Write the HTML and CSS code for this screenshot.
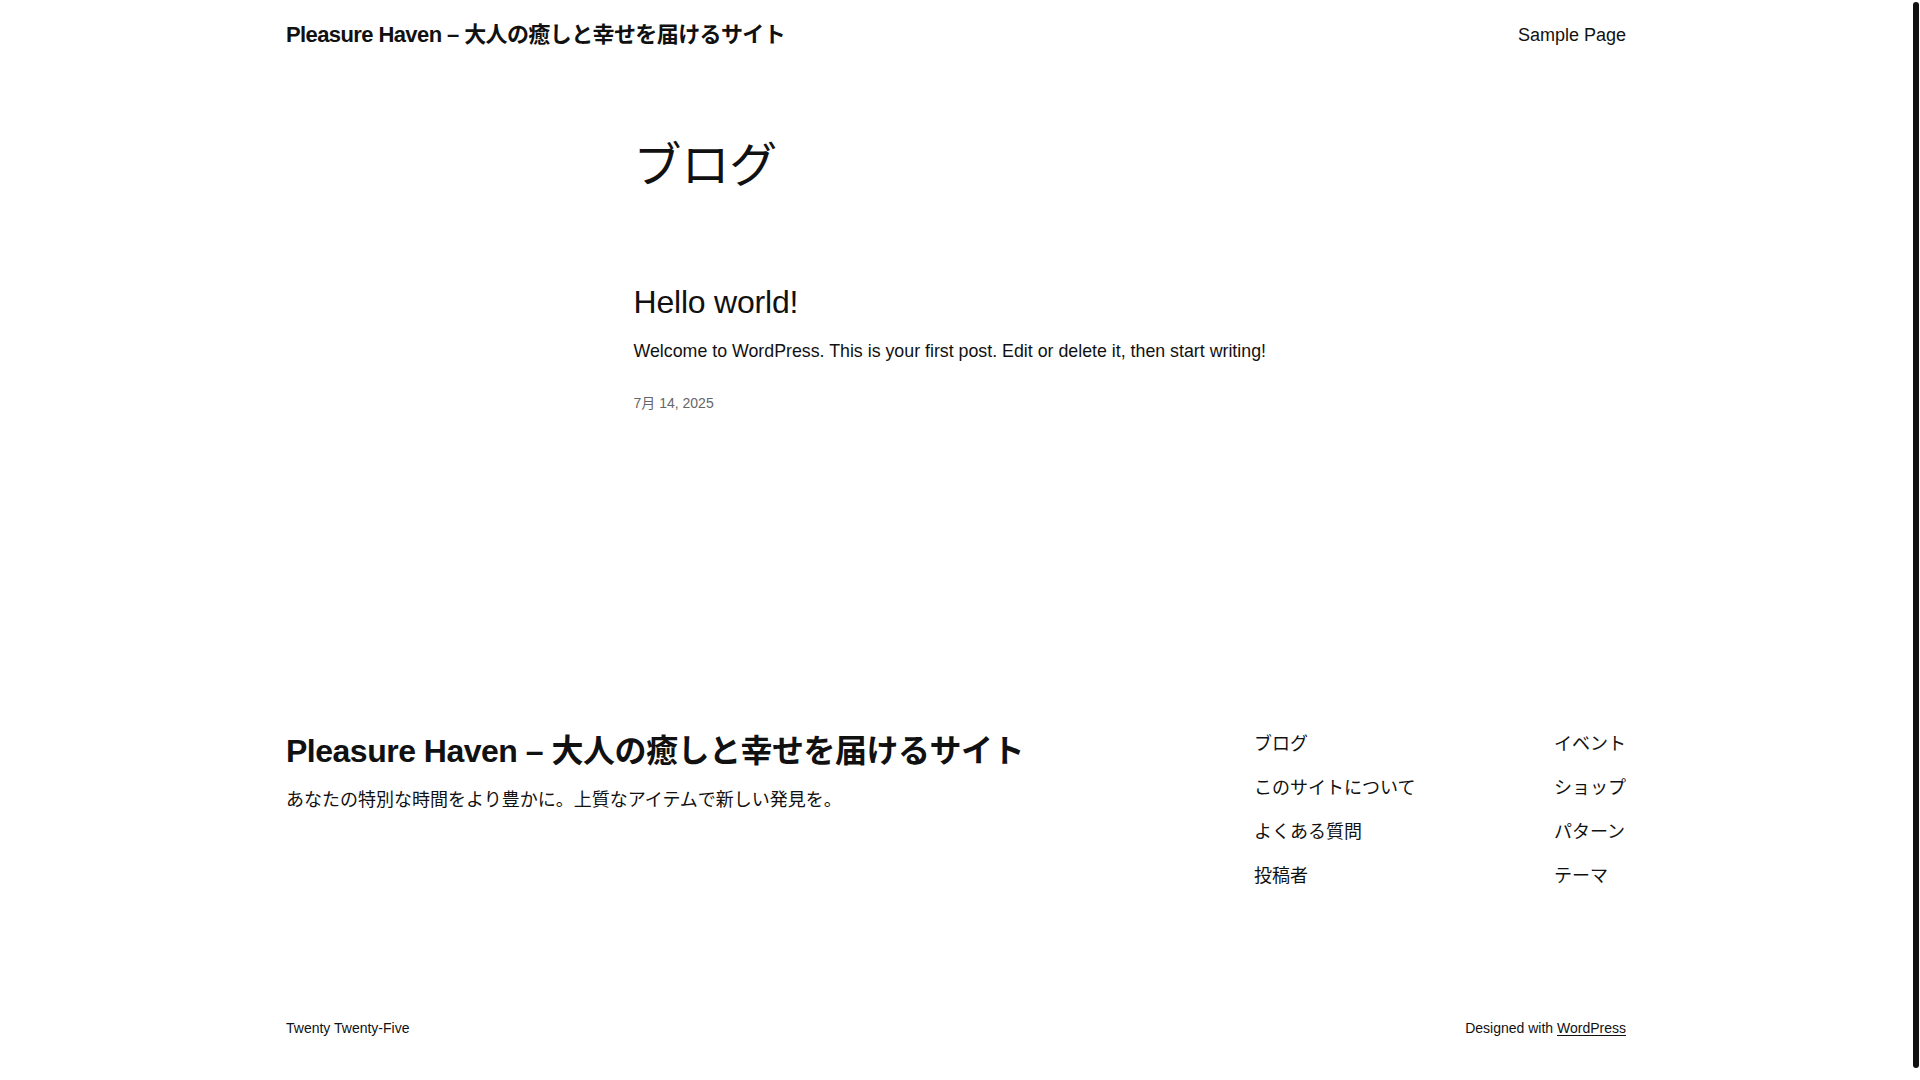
FILE: index.html
```html
<!DOCTYPE html>
<html lang="ja">
<head>
<meta charset="utf-8">
<title>ブログ – Pleasure Haven</title>
<link rel="stylesheet" href="styles.css">
</head>
<body>
<div class="viewport">
  <header class="site-header">
    <div class="wide row-between">
      <a class="site-title" href="#">Pleasure Haven – 大人の癒しと幸せを届けるサイト</a>
      <nav class="top-nav"><a href="#">Sample Page</a></nav>
    </div>
  </header>

  <main class="site-main">
    <div class="content">
      <h1 class="page-title">ブログ</h1>
      <article class="post">
        <h2 class="post-title"><a href="#">Hello world!</a></h2>
        <p class="post-excerpt">Welcome to WordPress. This is your first post. Edit or delete it, then start writing!</p>
        <div class="post-date">7月 14, 2025</div>
      </article>
    </div>
  </main>

  <footer class="site-footer">
    <div class="wide">
      <div class="footer-top">
        <div class="footer-brand">
          <a class="footer-title" href="#">Pleasure Haven – 大人の癒しと幸せを届けるサイト</a>
          <p class="tagline">あなたの特別な時間をより豊かに。上質なアイテムで新しい発見を。</p>
        </div>
        <div class="footer-navs">
          <ul class="footer-nav">
            <li><a href="#">ブログ</a></li>
            <li><a href="#">このサイトについて</a></li>
            <li><a href="#">よくある質問</a></li>
            <li><a href="#">投稿者</a></li>
          </ul>
          <ul class="footer-nav">
            <li><a href="#">イベント</a></li>
            <li><a href="#">ショップ</a></li>
            <li><a href="#">パターン</a></li>
            <li><a href="#">テーマ</a></li>
          </ul>
        </div>
      </div>
      <div class="footer-bottom">
        <span>Twenty Twenty-Five</span>
        <span>Designed with <a class="u" href="#">WordPress</a></span>
      </div>
    </div>
  </footer>
</div>
<div class="scrollbar"><div class="thumb"></div></div>
</body>
</html>
```

FILE: styles.css
```css
html, body {
  margin: 0;
  padding: 0;
  background: #fff;
  overflow: hidden;
}
body {
  font-family: "Liberation Sans", Arial, "Noto Sans CJK JP", sans-serif;
  color: #111;
  font-size: 18px;
  line-height: 1.6;
}
a { color: inherit; text-decoration: none; }
.viewport {
  width: 1912px;
  height: 1080px;
}
.wide {
  width: 1340px;
  margin: 0 auto;
}
.row-between {
  display: flex;
  justify-content: space-between;
  align-items: center;
}
.site-header {
  padding: 21px 0 19px;
}
.site-title {
  font-weight: 700;
  font-size: 22px;
  line-height: 28px;
  letter-spacing: -0.6px;
}
.top-nav a {
  font-size: 18px;
  line-height: 28px;
}
.site-main {
  padding-top: 70px;
}
.content {
  width: 645px;
  margin: 0 auto;
}
.page-title {
  margin: 0;
  font-weight: 400;
  font-size: 48px;
  line-height: 54px;
  letter-spacing: -0.1px;
}
.post {
  padding-top: 90px;
}
.post-title {
  margin: 0;
  font-weight: 400;
  font-size: 32px;
  line-height: 38px;
  letter-spacing: -0.2px;
}
.post-excerpt {
  margin: 16px 0 0;
  font-size: 17.8px;
  line-height: 29px;
}
.post-date {
  margin-top: 27px;
  font-size: 14px;
  line-height: 21px;
  color: #666;
}
.site-footer {
  padding-top: 316px;
}
.footer-top {
  display: flex;
  justify-content: space-between;
  align-items: flex-start;
}
.footer-brand {
  padding-top: 2px;
}
.footer-title {
  display: block;
  font-weight: 700;
  font-size: 32px;
  line-height: 38px;
  letter-spacing: -0.5px;
}
.tagline {
  margin: 16px 0 0;
  font-size: 18px;
  line-height: 29px;
}
.footer-navs {
  width: 372px;
  display: flex;
  justify-content: space-between;
}
.footer-nav {
  list-style: none;
  margin: 0;
  padding: 0;
  display: flex;
  flex-direction: column;
  gap: 15px;
}
.footer-nav li {
  font-size: 18px;
  line-height: 29px;
}
.footer-bottom {
  margin-top: 127px;
  display: flex;
  justify-content: space-between;
  font-size: 14px;
  line-height: 21px;
}
.u { text-decoration: underline; text-underline-offset: 2px; }
.scrollbar {
  position: fixed;
  top: 0;
  right: 0;
  width: 8px;
  height: 1080px;
  background: #fff;
}
.thumb {
  position: absolute;
  top: 2px;
  left: 1px;
  width: 6px;
  height: 1066px;
  border-radius: 3px;
  background: #111;
}
```
